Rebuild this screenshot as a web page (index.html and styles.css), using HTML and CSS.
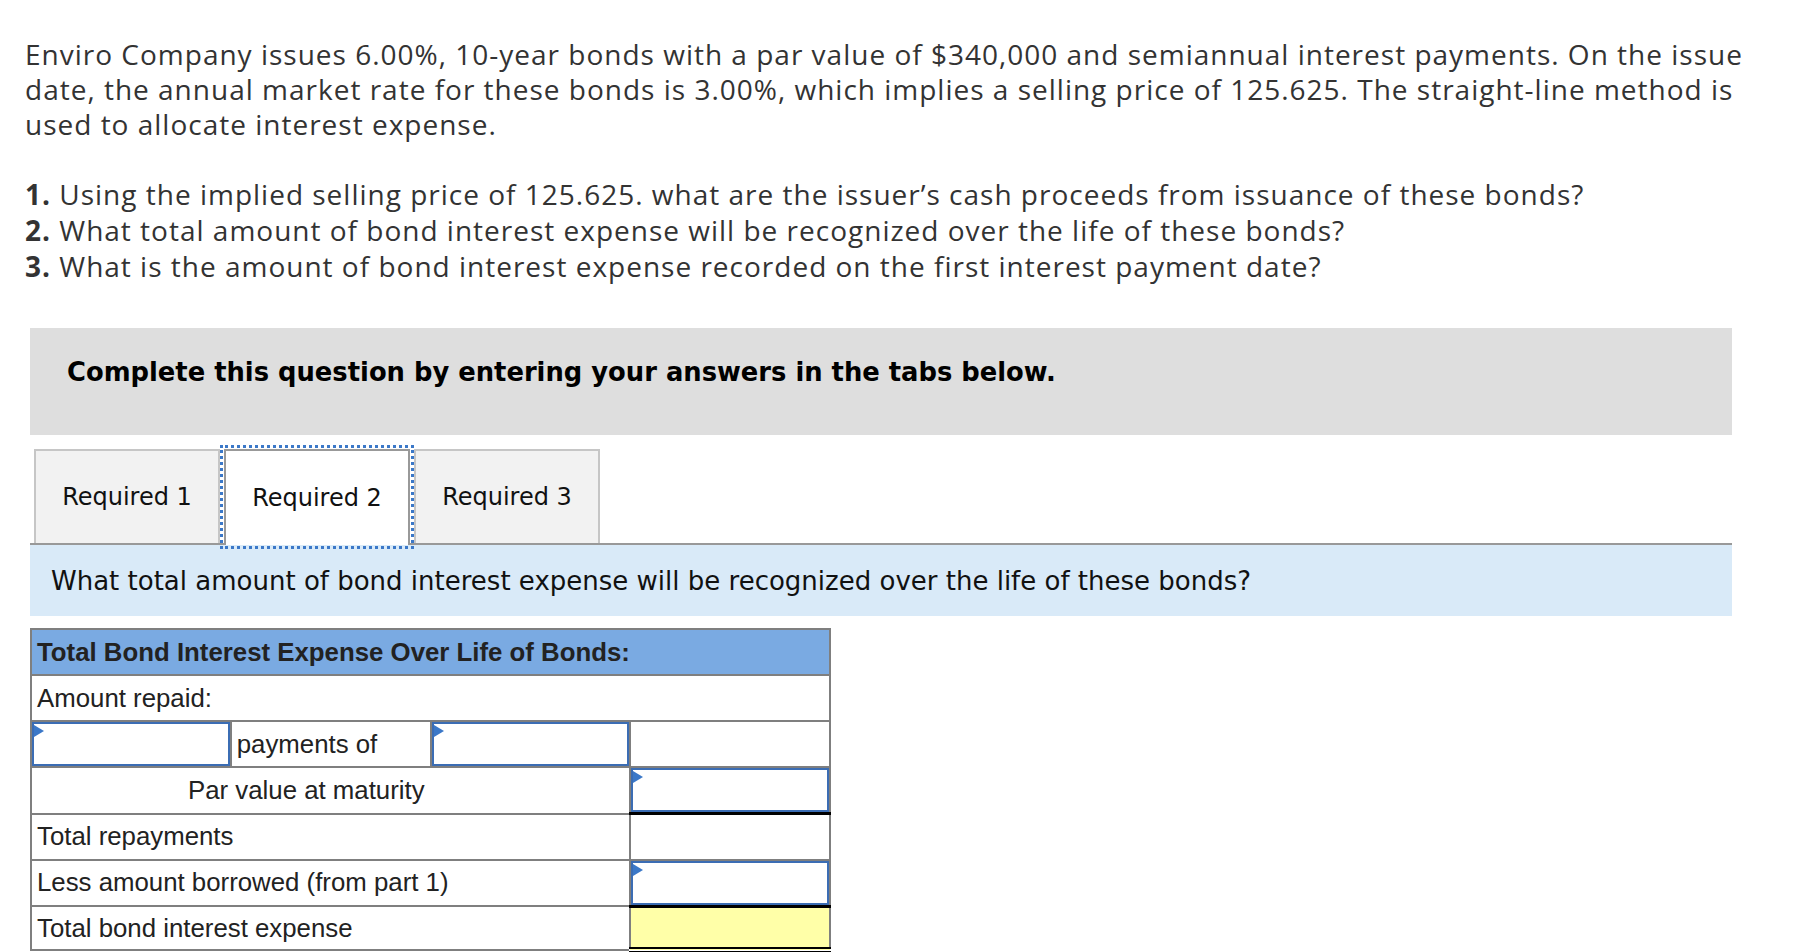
FILE: index.html
```html
<!DOCTYPE html>
<html lang="en">
<head>
<meta charset="utf-8">
<title>Bond interest expense</title>
<link rel="stylesheet" href="styles.css">
</head>
<body>
<div class="problem">
  <p class="intro">Enviro Company issues 6.00%, 10-year bonds with a par value of $340,000 and semiannual interest payments. On the issue date, the annual market rate for these bonds is 3.00%, which implies a selling price of 125.625. The straight-line method is used to allocate interest expense.</p>
  <ol class="reqs">
    <li><b>1.</b> Using the implied selling price of 125.625. what are the issuer’s cash proceeds from issuance of these bonds?</li>
    <li><b>2.</b> What total amount of bond interest expense will be recognized over the life of these bonds?</li>
    <li><b>3.</b> What is the amount of bond interest expense recorded on the first interest payment date?</li>
  </ol>
</div>

<div class="answer">
  <div class="instructions">Complete this question by entering your answers in the tabs below.</div>

  <div class="tabs">
    <div class="tab">Required 1</div>
    <div class="tab active">Required 2</div>
    <div class="tab">Required 3</div>
  </div>

  <div class="prompt">What total amount of bond interest expense will be recognized over the life of these bonds?</div>

  <table class="sheet">
    <colgroup><col><col><col><col></colgroup>
    <tr class="head"><th colspan="4">Total Bond Interest Expense Over Life of Bonds:</th></tr>
    <tr><td colspan="4">Amount repaid:</td></tr>
    <tr>
      <td class="input"><div class="field"></div></td>
      <td>payments of</td>
      <td class="input"><div class="field"></div></td>
      <td></td>
    </tr>
    <tr>
      <td colspan="3" class="indent">Par value at maturity</td>
      <td class="input sum"><div class="field"></div></td>
    </tr>
    <tr>
      <td colspan="3">Total repayments</td>
      <td></td>
    </tr>
    <tr>
      <td colspan="3">Less amount borrowed (from part 1)</td>
      <td class="input sum"><div class="field"></div></td>
    </tr>
    <tr class="last">
      <td colspan="3">Total bond interest expense</td>
      <td class="total"></td>
    </tr>
  </table>
</div>
</body>
</html>
```

FILE: styles.css
```css
* { box-sizing: border-box; }

html, body {
  margin: 0;
  padding: 0;
  background: #ffffff;
}

body {
  width: 1814px;
  min-height: 952px;
  overflow: hidden;
}

.problem {
  padding: 37px 0 0 25px;
  width: 1775px;
  font-family: "Open Sans", "Liberation Sans", sans-serif;
  font-size: 28px;
  letter-spacing: 1px;
  color: #333333;
}

.intro {
  margin: 0;
  line-height: 35px;
}

.reqs {
  list-style: none;
  margin: 34px 0 0 0;
  padding: 0;
  line-height: 36px;
}

.reqs b {
  font-weight: 700;
}

.answer {
  margin: 44px 0 0 30px;
  width: 1702px;
}

.instructions {
  background: #dedede;
  padding: 30px 37px 49px;
  height: 107px;
  font-family: "DejaVu Sans", Verdana, sans-serif;
  font-weight: bold;
  font-size: 25.8px;
  line-height: 28px;
  color: #000000;
}

.tabs {
  display: flex;
  align-items: stretch;
  gap: 4px;
  margin-top: 14px;
  padding-left: 4px;
  height: 96px;
  border-bottom: 2px solid #999999;
}

.tab {
  width: 186px;
  display: flex;
  align-items: center;
  justify-content: center;
  background: #f2f2f2;
  border: 2px solid #c6c6c6;
  border-bottom: none;
  font-family: "DejaVu Sans", Verdana, sans-serif;
  font-size: 24px;
  color: #111111;
}

.tab.active {
  background: #ffffff;
  border-color: #999999;
  outline: 3px dotted #3b78c8;
  outline-offset: 1px;
  margin-bottom: -2px;
  position: relative;
}

.prompt {
  background: #d9eaf8;
  height: 71px;
  display: flex;
  align-items: center;
  padding-left: 21px;
  font-family: "DejaVu Sans", Verdana, sans-serif;
  font-size: 26px;
  color: #111111;
}

.sheet {
  margin-top: 12px;
  border-collapse: collapse;
  table-layout: fixed;
  width: 801px;
  font-family: "Liberation Sans", Arial, sans-serif;
  font-size: 25.8px;
  color: #222222;
}

.sheet tr {
  height: 46px;
}

.sheet tr.last {
  height: 44px;
}

.sheet th,
.sheet td {
  border: 2px solid #7f7f7f;
  padding: 0 5px;
  text-align: left;
  white-space: nowrap;
}

.sheet .head th {
  background: #7aaae2;
  font-weight: bold;
}

.sheet td.indent {
  padding-left: 156px;
}

.sheet td.input {
  padding: 0;
  position: relative;
}

.field {
  height: 44px;
  border: 2px solid #3b6db4;
  background: #ffffff;
}

.sheet td.input::before {
  content: "";
  position: absolute;
  left: 2px;
  top: 3px;
  border-left: 10px solid #3b78c8;
  border-top: 6px solid transparent;
  border-bottom: 6px solid transparent;
}

.sheet td.sum {
  border-bottom: 3px solid #000000;
}

.sheet td.total {
  background: #ffffa8;
  border-bottom: 6px double #000000;
}
```
